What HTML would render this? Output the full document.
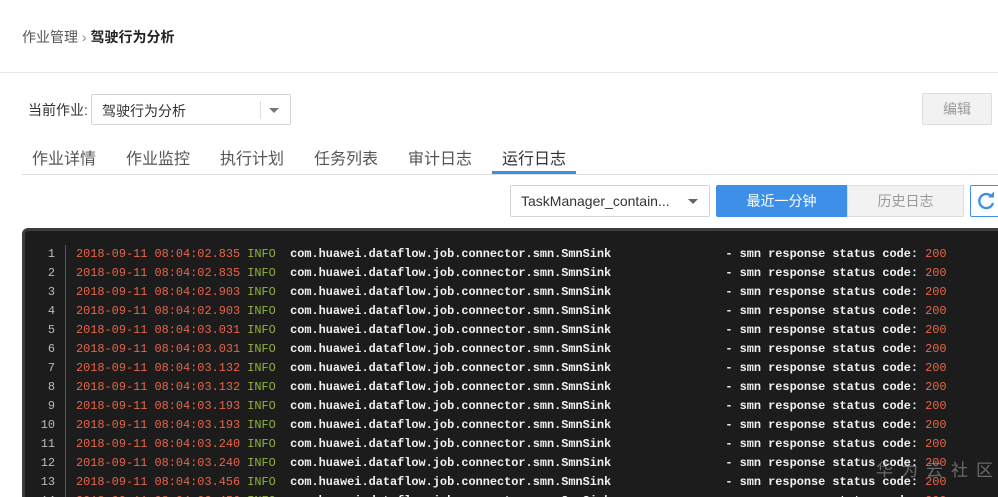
<!DOCTYPE html><html><head><meta charset="utf-8"><style>
*{margin:0;padding:0;box-sizing:border-box}
html,body{width:998px;height:497px;overflow:hidden}
body{background:#fff;font-family:"Liberation Sans","Noto Sans CJK SC",sans-serif;position:relative;color:#333}
.a{position:absolute;white-space:nowrap}
.log{position:absolute;left:22px;top:228px;width:976px;height:269px;background:#1c1c1c;border:3px solid #3c3c3c;border-right:none;border-bottom:none;border-radius:6px 0 0 0;overflow:hidden}
pre{font-family:"Liberation Mono","DejaVu Sans Mono",monospace;font-size:11.9px;line-height:19px;color:#f2f2f2;font-weight:bold}
.r{color:#e8644a;font-weight:normal}.g{color:#8fb33a;font-weight:normal}
.n{position:absolute;left:0;top:14px;width:41px;border-right:1px solid #555;text-align:right;padding-right:10px;color:#bbb;font-weight:normal}
</style></head><body>
<div class="a" style="left:22px;top:27px;font-size:14px;color:#555">作业管理 <span style="color:#888">›</span> <b style="color:#222">驾驶行为分析</b></div>
<div class="a" style="left:0;top:72px;width:998px;height:1px;background:#e6e6e6"></div>
<div class="a" style="left:28px;top:100px;font-size:14px;color:#333">当前作业:</div>
<div class="a" style="left:91px;top:94px;width:200px;height:31px;border:1px solid #d5d5d5;border-radius:2px;font-size:14px;padding:6px 10px">驾驶行为分析
<div class="a" style="left:168px;top:6px;width:1px;height:18px;background:#ddd"></div>
<div class="a" style="left:177px;top:13px;border-left:5px solid transparent;border-right:5px solid transparent;border-top:5px solid #777"></div></div>
<div class="a" style="left:922px;top:93px;width:70px;height:32px;background:#f2f2f2;border:1px solid #ddd;border-radius:2px;font-size:14px;color:#999;text-align:center;line-height:30px">编辑</div>
<div class="a" style="left:22px;top:174px;width:976px;height:1px;background:#ddd"></div>
<div class="a" style="left:32px;top:145px;font-size:16px;color:#555">
<span class="a" style="left:0">作业详情</span><span class="a" style="left:94px">作业监控</span><span class="a" style="left:188px">执行计划</span><span class="a" style="left:282px">任务列表</span><span class="a" style="left:376px">审计日志</span><span class="a" style="left:470px;color:#333">运行日志</span></div>
<div class="a" style="left:492px;top:171px;width:84px;height:3px;background:#3d8fe0"></div>
<div class="a" style="left:510px;top:185px;width:200px;height:32px;border:1px solid #d5d5d5;border-radius:2px;font-size:14px;padding:7px 10px">TaskManager_contain...
<div class="a" style="left:177px;top:13px;border-left:5px solid transparent;border-right:5px solid transparent;border-top:5px solid #666"></div></div>
<div class="a" style="left:716px;top:185px;width:131px;height:32px;background:#3d8fe8;color:#fff;font-size:14px;text-align:center;line-height:32px;border-radius:2px 0 0 2px">最近一分钟</div>
<div class="a" style="left:847px;top:185px;width:117px;height:32px;background:#f2f2f2;border:1px solid #ddd;color:#999;font-size:14px;text-align:center;line-height:30px">历史日志</div>
<div class="a" style="left:970px;top:185px;width:28px;height:32px;border:1px solid #3d8fe8;border-right:none;border-radius:2px 0 0 2px;overflow:hidden"><svg width="20" height="20" viewBox="0 0 20 20" style="position:absolute;left:6px;top:5px"><path d="M15 6A7 7 0 1 0 16 12" fill="none" stroke="#3d8fe8" stroke-width="2.4"/><path d="M11 6.5h6v-6z" fill="#3d8fe8"/></svg></div>
<div class="log">
<pre class="n">1
2
3
4
5
6
7
8
9
10
11
12
13
14</pre>
<pre style="position:absolute;left:51px;top:14px"><span class="r">2018-09-11 08:04:02.835</span> <span class="g">INFO</span>  com.huawei.dataflow.job.connector.smn.SmnSink                - smn response status code: <span class="r">200</span>
<span class="r">2018-09-11 08:04:02.835</span> <span class="g">INFO</span>  com.huawei.dataflow.job.connector.smn.SmnSink                - smn response status code: <span class="r">200</span>
<span class="r">2018-09-11 08:04:02.903</span> <span class="g">INFO</span>  com.huawei.dataflow.job.connector.smn.SmnSink                - smn response status code: <span class="r">200</span>
<span class="r">2018-09-11 08:04:02.903</span> <span class="g">INFO</span>  com.huawei.dataflow.job.connector.smn.SmnSink                - smn response status code: <span class="r">200</span>
<span class="r">2018-09-11 08:04:03.031</span> <span class="g">INFO</span>  com.huawei.dataflow.job.connector.smn.SmnSink                - smn response status code: <span class="r">200</span>
<span class="r">2018-09-11 08:04:03.031</span> <span class="g">INFO</span>  com.huawei.dataflow.job.connector.smn.SmnSink                - smn response status code: <span class="r">200</span>
<span class="r">2018-09-11 08:04:03.132</span> <span class="g">INFO</span>  com.huawei.dataflow.job.connector.smn.SmnSink                - smn response status code: <span class="r">200</span>
<span class="r">2018-09-11 08:04:03.132</span> <span class="g">INFO</span>  com.huawei.dataflow.job.connector.smn.SmnSink                - smn response status code: <span class="r">200</span>
<span class="r">2018-09-11 08:04:03.193</span> <span class="g">INFO</span>  com.huawei.dataflow.job.connector.smn.SmnSink                - smn response status code: <span class="r">200</span>
<span class="r">2018-09-11 08:04:03.193</span> <span class="g">INFO</span>  com.huawei.dataflow.job.connector.smn.SmnSink                - smn response status code: <span class="r">200</span>
<span class="r">2018-09-11 08:04:03.240</span> <span class="g">INFO</span>  com.huawei.dataflow.job.connector.smn.SmnSink                - smn response status code: <span class="r">200</span>
<span class="r">2018-09-11 08:04:03.240</span> <span class="g">INFO</span>  com.huawei.dataflow.job.connector.smn.SmnSink                - smn response status code: <span class="r">200</span>
<span class="r">2018-09-11 08:04:03.456</span> <span class="g">INFO</span>  com.huawei.dataflow.job.connector.smn.SmnSink                - smn response status code: <span class="r">200</span>
<span class="r">2018-09-11 08:04:03.456</span> <span class="g">INFO</span>  com.huawei.dataflow.job.connector.smn.SmnSink                - smn response status code: <span class="r">200</span></pre>
</div>
<div class="a" style="left:876px;top:456px;font-size:17px;color:rgba(200,200,200,.45);letter-spacing:8px;width:122px;overflow:hidden">华为云社区</div>
</body></html>
